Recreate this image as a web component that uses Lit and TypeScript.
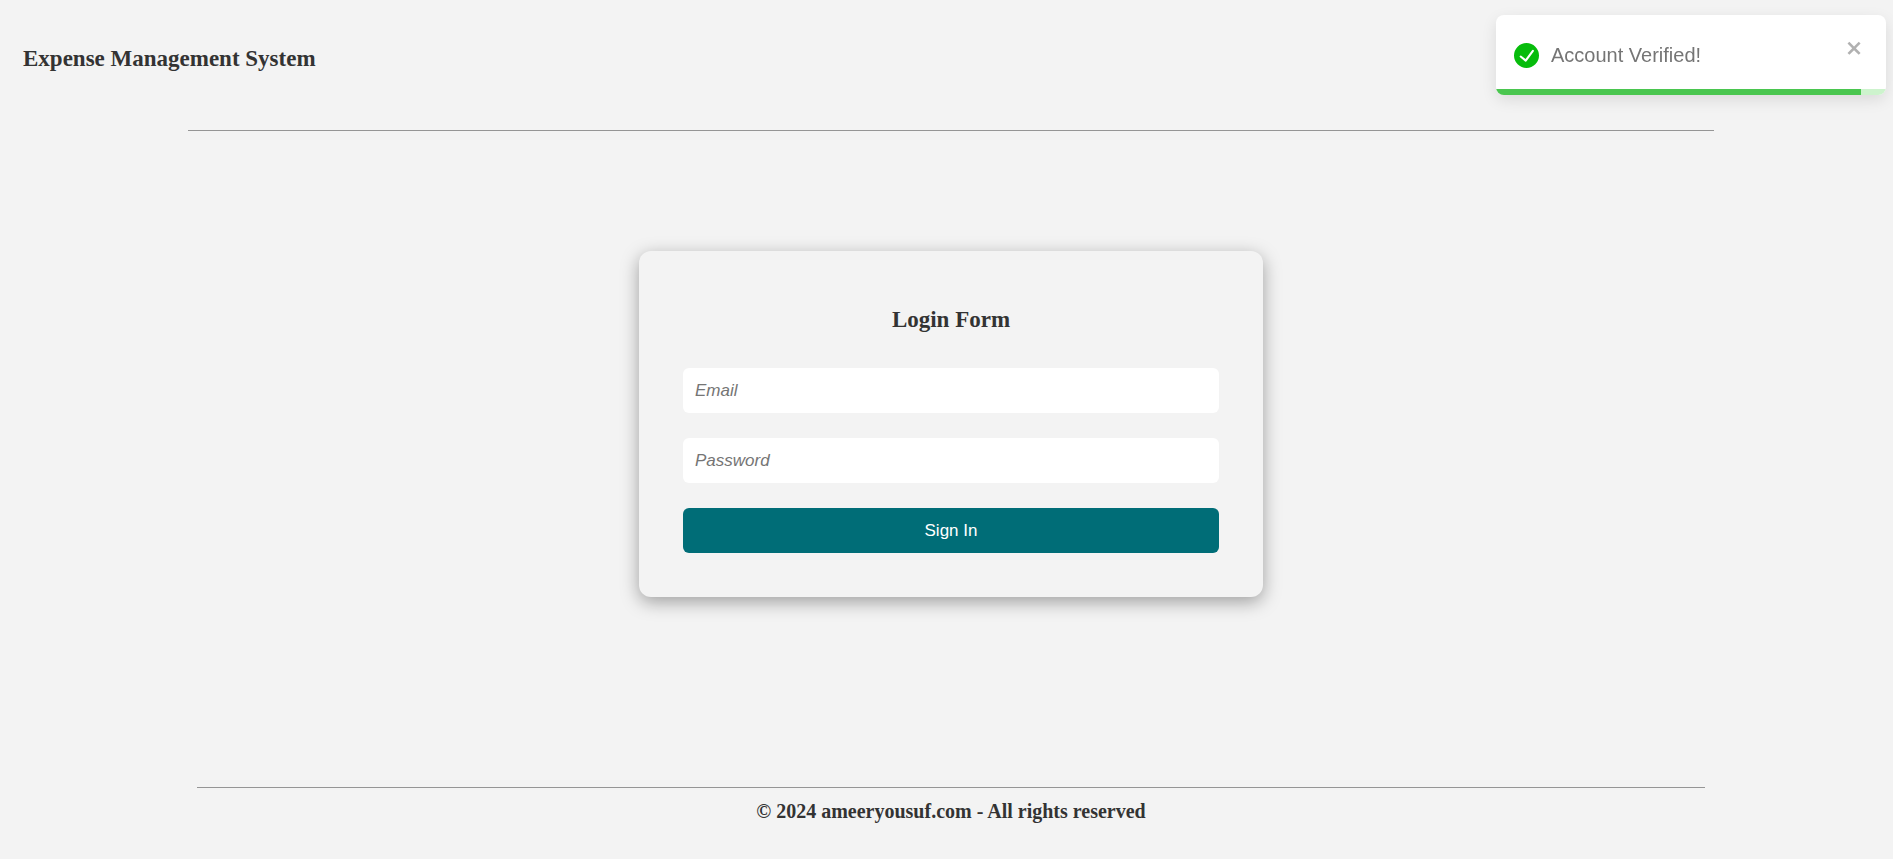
import { LitElement, html, css } from "lit";
import { customElement, state } from "lit/decorators.js";

@customElement("toast-message")
class ToastMessage extends LitElement {
  static styles = css`
    :host {
      position: fixed;
      top: 15px;
      right: 7px;
      z-index: 10;
      width: 390px;
      max-width: calc(100vw - 14px);
      font-family: "Liberation Sans", Arial, sans-serif;
    }
    .toast {
      display: flex;
      flex-direction: column;
      overflow: hidden;
      border-radius: 8px;
      background: #fff;
      box-shadow: 0 5px 15px rgba(0, 0, 0, 0.1);
    }
    .body {
      display: flex;
      align-items: center;
      gap: 12px;
      padding: 6px 22px 0 18px;
      height: 68px;
    }
    .icon {
      width: 25px;
      height: 25px;
      flex: none;
      fill: #07bc0c;
    }
    .text {
      flex: 1;
      font-size: 20px;
      line-height: 24px;
      color: #757575;
    }
    .close {
      align-self: flex-start;
      display: flex;
      margin-top: 17px;
      padding: 0;
      border: 0;
      background: none;
      color: #000;
      opacity: 0.3;
      cursor: pointer;
    }
    .close svg {
      width: 18px;
      height: 20px;
      fill: currentColor;
    }
    .track {
      height: 6px;
      background: #cdf3cd;
    }
    .bar {
      height: 100%;
      background: #4ac64f;
    }
  `;

  @state() private progress = 93.6;

  render() {
    return html`
      <div class="toast" role="alert">
        <div class="body">
          <svg class="icon" viewBox="0 0 24 24" aria-hidden="true">
            <path
              d="M12 0a12 12 0 1012 12A12.014 12.014 0 0012 0zm6.927 8.2l-6.845 9.289a1.011 1.011 0 01-1.43.188l-4.888-3.908a1 1 0 111.25-1.562l4.076 3.261 6.227-8.451a1 1 0 111.61 1.183z"
            />
          </svg>
          <div class="text">Account Verified!</div>
          <button class="close" type="button" aria-label="close" @click=${() => this.remove()}>
            <svg viewBox="0 0 14 16" aria-hidden="true">
              <path
                fill-rule="evenodd"
                d="M7.71 8.23l3.75 3.75-1.48 1.48-3.75-3.75-3.75 3.75L1 11.98l3.75-3.75L1 4.48 2.48 3l3.75 3.75L9.98 3l1.48 1.48-3.75 3.75z"
              />
            </svg>
          </button>
        </div>
        <div class="track"><div class="bar" style="width:${this.progress}%"></div></div>
      </div>
    `;
  }
}

@customElement("app-root")
class AppRoot extends LitElement {
  static styles = css`
    :host {
      display: flex;
      flex-direction: column;
      box-sizing: border-box;
      min-height: 100vh;
      padding-left: 9px;
      background: #f3f3f3;
      color: #333;
      font-family: "Liberation Serif", "Times New Roman", serif;
    }
    .header {
      padding: 45px 14px 57px;
    }
    .title {
      margin: 0;
      font-size: 23px;
      line-height: 28px;
      font-weight: 700;
    }
    .rule {
      height: 1px;
      margin: 0 auto;
      border: 0;
      background: #959595;
    }
    .rule-top {
      width: 81%;
    }
    .rule-bottom {
      width: 80%;
    }
    .main {
      flex: 1;
      display: flex;
      align-items: center;
      justify-content: center;
      padding-bottom: 70px;
    }
    .card {
      display: flex;
      flex-direction: column;
      gap: 25px;
      box-sizing: border-box;
      width: 624px;
      max-width: 100%;
      padding: 55px 44px 44px;
      border-radius: 12px;
      box-shadow: 0 5px 18px rgba(0, 0, 0, 0.35);
    }
    .card .title {
      margin-bottom: 9px;
      text-align: center;
    }
    .field,
    .submit {
      display: block;
      box-sizing: border-box;
      width: 100%;
      height: 45px;
      margin: 0;
      border: 0;
      border-radius: 6px;
      font-family: "Liberation Sans", Arial, sans-serif;
      font-size: 17px;
    }
    .field {
      padding: 0 12px;
      background: #fff;
      color: #333;
      outline: none;
    }
    .field::placeholder {
      font-style: italic;
      color: #757575;
    }
    .submit {
      background: #006d77;
      color: #fff;
      cursor: pointer;
    }
    .footer {
      padding: 11px 0 36px;
      text-align: center;
      font-size: 20px;
      line-height: 24px;
      font-weight: 700;
    }
  `;

  render() {
    return html`
      <header class="header"><h1 class="title">Expense Management System</h1></header>
      <hr class="rule rule-top" />
      <main class="main">
        <form class="card" @submit=${(e: Event) => e.preventDefault()}>
          <h2 class="title">Login Form</h2>
          <input class="field" type="email" placeholder="Email" aria-label="Email" />
          <input class="field" type="password" placeholder="Password" aria-label="Password" />
          <button class="submit" type="submit">Sign In</button>
        </form>
      </main>
      <hr class="rule rule-bottom" />
      <footer class="footer">© 2024 ameeryousuf.com - All rights reserved</footer>
      <toast-message></toast-message>
    `;
  }
}
